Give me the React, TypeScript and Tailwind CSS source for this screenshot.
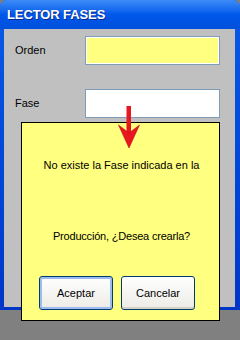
export default function App() {
  const font = "font-['Liberation_Sans',Arial,sans-serif]";
  return (
    <div className={`relative w-[240px] h-[340px] bg-[#808080] ${font}`}>
      <div className="flex flex-col h-[310px] rounded-t-[7px] bg-linear-to-b from-[#0a5ae8] to-[#0036c8] overflow-hidden">
        <div className="h-[29px] shrink-0 flex items-center pl-[7px] pt-[1px] bg-linear-to-b from-[#3d8cf8] via-[#0058ea] to-[#0050dc]">
          <span className="text-white font-bold text-[13px] tracking-[-0.1px] [text-shadow:1px_1px_0_#0a2a8a]">
            LECTOR FASES
          </span>
        </div>
        <div className="flex-1 mx-[4px] mr-[5px] mb-[3px] bg-[#c0c0c0] pl-[11px] pr-[15px] pt-[7px] flex flex-col gap-[24px]">
          <div className="flex items-center justify-between">
            <span className="text-[11px] text-black">Orden</span>
            <div className="w-[135px] h-[29px] border border-[#7f9db9] bg-[#ffff80] shadow-[inset_0_0_0_1px_#ffffff]" />
          </div>
          <div className="flex items-center justify-between">
            <span className="text-[11px] text-black">Fase</span>
            <div className="w-[135px] h-[29px] border border-[#7f9db9] bg-white" />
          </div>
        </div>
      </div>

      <div className="absolute left-[21px] top-[122px] w-[199px] h-[199px] border border-black bg-[#ffff80] flex flex-col items-center">
        <p className="mt-[36px] pl-[2px] text-[11px] leading-[13px] text-black">
          No existe la Fase indicada en la
        </p>
        <p className="mt-[58px] pl-[2px] text-[11px] leading-[13px] tracking-[-0.2px] text-black">
          Producción, ¿Desea crearla?
        </p>
        <div className="mt-[33px] flex gap-[8px] self-start pl-[17px]">
          <button className="w-[74px] h-[34px] rounded-[3px] border border-[#003c74] bg-linear-to-b from-white to-[#ecebe6] shadow-[inset_0_0_0_2px_#9cbcf0] text-[11px] text-black">
            Aceptar
          </button>
          <button className="w-[74px] h-[34px] rounded-[3px] border border-[#003c74] bg-linear-to-b from-white to-[#ecebe6] shadow-[inset_0_-2px_0_#d6d0c5] text-[11px] text-black">
            Cancelar
          </button>
        </div>
      </div>

      <svg
        className="absolute left-[118px] top-[106px]"
        width="22"
        height="43"
        viewBox="0 0 22 43"
      >
        <rect x="8.5" y="0" width="4.5" height="29" fill="#e8161e" />
        <polygon points="0.5,19 11,27 21.5,19 11,42" fill="#e8161e" stroke="#c01018" strokeWidth="0.6" />
      </svg>
    </div>
  );
}
